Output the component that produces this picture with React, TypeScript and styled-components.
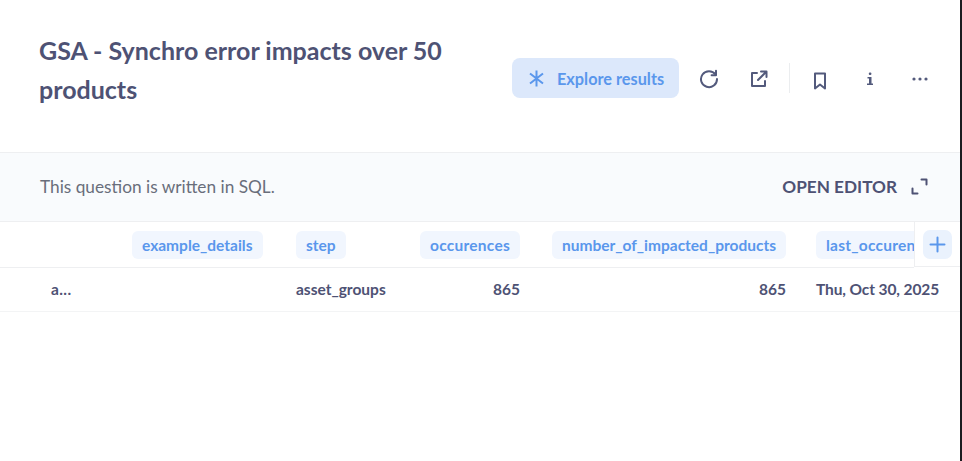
import React from "react";
import styled, { createGlobalStyle } from "styled-components";

const Global = createGlobalStyle`
  html, body { margin: 0; padding: 0; background: #fff; overflow: hidden; }
  body { font-family: Lato, "Liberation Sans", sans-serif; color: #4e5274; }
`;

const Page = styled.div`
  width: 962px;
  height: 461px;
  box-sizing: border-box;
  border-right: 2px solid #1b1b1f;
  overflow: hidden;
  display: flex;
  flex-direction: column;
`;

const Header = styled.header`
  height: 152px;
  box-sizing: border-box;
  padding: 31px 16px 0 39px;
  display: flex;
  justify-content: space-between;
  align-items: flex-start;
`;

const Title = styled.h1`
  margin: 0;
  width: 440px;
  font-size: 25px;
  line-height: 39px;
  font-weight: 700;
  color: #4e5274;
`;

const Actions = styled.div`
  margin-top: 27px;
  display: flex;
  align-items: center;
`;

const ExploreButton = styled.button`
  width: 167px;
  height: 40px;
  border: 0;
  border-radius: 8px;
  background: #dce8fb;
  color: #5a97ec;
  font: 700 16.3px Lato, sans-serif;
  display: flex;
  align-items: center;
  gap: 12px;
  padding: 0 0 0 16px;
  margin-right: 7px;
`;

const IconSlot = styled.span<{ $width?: number; $drop?: number }>`
  width: ${(p) => p.$width ?? 50}px;
  height: 40px;
  padding-top: ${(p) => p.$drop ?? 0}px;
  box-sizing: border-box;
  display: flex;
  align-items: center;
  justify-content: center;
  color: #535a7c;
`;

const Divider = styled.span`
  width: 1px;
  height: 30px;
  background: #ebedef;
  margin: 0 6px 0 3px;
`;

const Notice = styled.section`
  height: 70px;
  box-sizing: border-box;
  border-top: 1px solid #eeeff1;
  border-bottom: 1px solid #eeeff1;
  background: #f9fbfd;
  padding: 0 32px 2px 40px;
  display: flex;
  align-items: center;
  justify-content: space-between;
`;

const NoticeText = styled.span`
  font-size: 17.25px;
  color: #696e7b;
`;

const EditorLink = styled.span`
  display: flex;
  align-items: center;
  gap: 14px;
  font-size: 17.2px;
  font-weight: 700;
  color: #4e5274;
`;

const TableWrap = styled.div`
  position: relative;
`;

const HeaderRow = styled.div`
  height: 46px;
  width: 914px;
  box-sizing: border-box;
  border-bottom: 1px solid #eeeff1;
  display: grid;
  grid-template-columns: 116px 164px 122px 134px 266px 112px;
  align-items: center;
  overflow: hidden;
`;

const HeaderCell = styled.div<{ $right?: boolean; $last?: boolean }>`
  min-width: 0;
  box-sizing: border-box;
  padding: 0 ${(p) => (p.$last ? "0" : "16px")} 0 ${(p) => (p.$last ? "14px" : "16px")};
  display: flex;
  justify-content: ${(p) => (p.$right ? "flex-end" : "flex-start")};
`;

const Pill = styled.span<{ $clip?: boolean; $tracking?: number }>`
  height: 28px;
  box-sizing: border-box;
  padding: 0 10px;
  border-radius: 6px;
  background: #f1f6fe;
  color: #5a97ec;
  font-size: 15.5px;
  font-weight: 700;
  line-height: 28px;
  letter-spacing: ${(p) => p.$tracking ?? 0}px;
  white-space: nowrap;
  overflow: hidden;
  ${(p) => (p.$clip ? "padding-right: 0; border-radius: 6px 0 0 6px;" : "")}
`;

const AddColumn = styled.div`
  position: absolute;
  top: 0;
  left: 914px;
  width: 46px;
  height: 45px;
  box-sizing: border-box;
  border-left: 1px solid #eeeff1;
  border-bottom: 1px solid #eeeff1;
  background: #fff;
  display: flex;
  align-items: center;
  padding-left: 8px;
`;

const AddButton = styled.span`
  width: 29px;
  height: 29px;
  border-radius: 7px;
  background: #eaf2fd;
  color: #5a97ec;
  display: flex;
  align-items: center;
  justify-content: center;
`;

const DataRow = styled.div`
  height: 44px;
  box-sizing: border-box;
  border-bottom: 1px solid #f3f4f5;
  padding-bottom: 2px;
  display: grid;
  grid-template-columns: 116px 164px 122px 134px 266px 160px;
  align-items: center;
  overflow: hidden;
`;

const DataCell = styled.div<{ $right?: boolean; $inset?: number; $tracking?: number }>`
  min-width: 0;
  box-sizing: border-box;
  padding: 0 16px 0 ${(p) => p.$inset ?? 16}px;
  font-size: 15.5px;
  font-weight: 700;
  letter-spacing: ${(p) => p.$tracking ?? 0}px;
  color: #4e5274;
  white-space: nowrap;
  text-align: ${(p) => (p.$right ? "right" : "left")};
`;

const strokeProps = {
  fill: "none",
  stroke: "currentColor",
  strokeWidth: 2,
  strokeLinecap: "round" as const,
  strokeLinejoin: "round" as const,
};

export default function App() {
  return (
    <Page>
      <Global />
      <Header>
        <Title>GSA - Synchro error impacts over 50 products</Title>
        <Actions>
          <ExploreButton>
            <svg width="17" height="17" viewBox="0 0 17 17" {...strokeProps} strokeLinecap="butt">
              <path d="M8.500 0.500v16M2 3.500l13 10M15 3.500 2 13.500" />
            </svg>
            Explore results
          </ExploreButton>
          <IconSlot $width={46} $drop={1}>
            <svg width="20" height="20" viewBox="0 0 20 20" {...strokeProps}>
              <path d="M16.500 5.500A8 8 0 1 0 18 10" />
              <path d="M17 1.800v4.400h-4.400" />
            </svg>
          </IconSlot>
          <IconSlot $width={54} $drop={1}>
            <svg width="18" height="18" viewBox="0 0 18 18" {...strokeProps}>
              <path d="M7 3H2v13h13v-5" />
              <path d="M8 10l8-8M11 1.500h5.500V7" />
            </svg>
          </IconSlot>
          <Divider />
          <IconSlot $width={48} $drop={6}>
            <svg width="14" height="18" viewBox="0 0 14 18" {...strokeProps}>
              <path d="M2 1.500h10v15l-5-4-5 4z" />
            </svg>
          </IconSlot>
          <IconSlot $width={52} $drop={1}>
            <svg width="8" height="14" viewBox="0 0 8 14" fill="currentColor">
              <rect x="2.800" y="0.500" width="2.600" height="2.600" rx="1" />
              <path d="M1.500 5h4v6.500H7V13H1v-1.500h2V6.500H1.500z" />
            </svg>
          </IconSlot>
          <IconSlot $width={48} $drop={1}>
            <svg width="16" height="4" viewBox="0 0 16 4" fill="currentColor">
              <circle cx="2" cy="2" r="1.600" />
              <circle cx="8" cy="2" r="1.600" />
              <circle cx="14" cy="2" r="1.600" />
            </svg>
          </IconSlot>
        </Actions>
      </Header>
      <Notice>
        <NoticeText>This question is written in SQL.</NoticeText>
        <EditorLink>
          OPEN EDITOR
          <svg width="17" height="17" viewBox="0 0 17 17" {...strokeProps}>
            <path d="M10.500 1.500h5v5M1.500 10.500v5h5" />
          </svg>
        </EditorLink>
      </Notice>
      <TableWrap>
        <HeaderRow>
          <HeaderCell />
          <HeaderCell><Pill>example_details</Pill></HeaderCell>
          <HeaderCell><Pill>step</Pill></HeaderCell>
          <HeaderCell $right><Pill $tracking={0.25}>occurences</Pill></HeaderCell>
          <HeaderCell $right><Pill>number_of_impacted_products</Pill></HeaderCell>
          <HeaderCell $last><Pill $clip $tracking={0.25}>last_occurence</Pill></HeaderCell>
        </HeaderRow>
        <AddColumn>
          <AddButton>
            <svg width="17" height="17" viewBox="0 0 17 17" {...strokeProps}>
              <path d="M8.500 1.500v14M1.500 8.500h14" />
            </svg>
          </AddButton>
        </AddColumn>
        <DataRow>
          <DataCell $inset={51} $tracking={0.4}>a...</DataCell>
          <DataCell />
          <DataCell>asset_groups</DataCell>
          <DataCell $right>865</DataCell>
          <DataCell $right>865</DataCell>
          <DataCell $inset={14} $tracking={-0.1}>Thu, Oct 30, 2025</DataCell>
        </DataRow>
      </TableWrap>
    </Page>
  );
}
